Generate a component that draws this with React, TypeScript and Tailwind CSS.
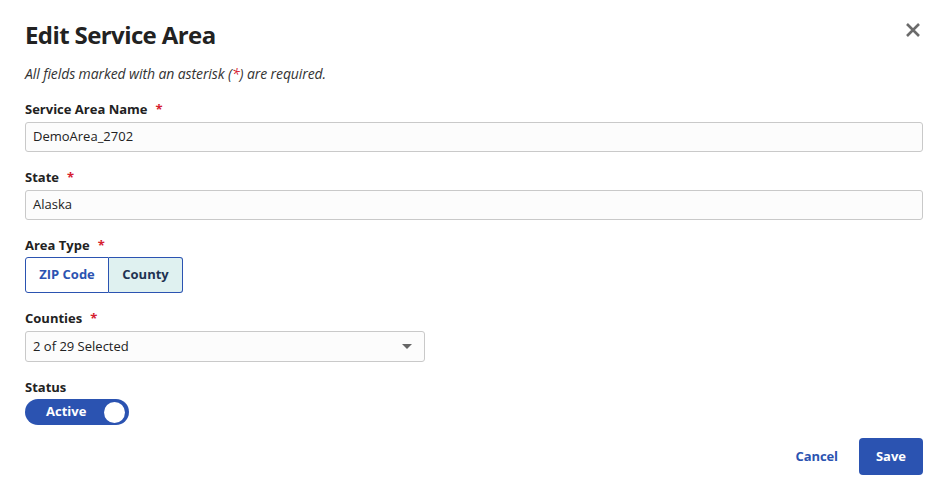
import React from "react";

const Req = () => <span className="ml-[8px] text-[#d6202f]">*</span>;

const Label = ({ text, required }: { text: string; required?: boolean }) => (
  <div className="text-[13px] leading-[18px] font-bold text-[#222]">
    {text}
    {required && <Req />}
  </div>
);

export default function App() {
  return (
    <div
      className="w-[948px] h-[500px] bg-white px-[25px] pt-[19px]"
      style={{ fontFamily: '"Open Sans", "Noto Sans", sans-serif' }}
    >
      <div className="flex justify-between items-start">
        <h2 className="text-[24px] leading-[32px] font-bold tracking-[-0.6px] text-[#222]">Edit Service Area</h2>
        <button className="mt-[3px] mr-[2px] text-[#6b6b6b]">
          <svg width="16" height="16" viewBox="0 0 16 16">
            <path d="M2 2 L14 14 M14 2 L2 14" stroke="currentColor" strokeWidth="2.6" />
          </svg>
        </button>
      </div>
      <p className="mt-[14px] text-[14px] leading-[18px] italic text-[#333] tracking-[-0.1px]">
        All fields marked with an asterisk (<span className="text-[#d6202f]">*</span>) are required.
      </p>

      <div className="mt-[17px]">
        <Label text="Service Area Name" required />
        <div className="mt-[4px] h-[30px] border border-[#c9c9c9] rounded-[3px] bg-[#fcfcfc] px-[7px] flex items-center text-[13px] text-[#222]">
          DemoArea_2702
        </div>
      </div>

      <div className="mt-[16px]">
        <Label text="State" required />
        <div className="mt-[4px] h-[30px] border border-[#c9c9c9] rounded-[3px] bg-[#fcfcfc] px-[7px] flex items-center text-[13px] text-[#222]">
          Alaska
        </div>
      </div>

      <div className="mt-[16px]">
        <Label text="Area Type" required />
        <div className="mt-[3px] flex h-[36px] w-[158px] text-[13px] font-bold">
          <button className="w-[84px] border border-[#2b53b1] rounded-l-[3px] text-[#2b53b1] bg-white">
            ZIP Code
          </button>
          <button className="w-[74px] border border-l-0 border-[#2b53b1] rounded-r-[3px] text-[#1e3352] bg-[#dff1f0]">
            County
          </button>
        </div>
      </div>

      <div className="mt-[16px]">
        <Label text="Counties" required />
        <div className="mt-[4px] w-[400px] h-[31px] border border-[#c9c9c9] rounded-[3px] bg-[#fcfcfc] pl-[7px] pr-[12px] flex items-center justify-between text-[13px] text-[#222]">
          <span>2 of 29 Selected</span>
          <svg width="10" height="5" viewBox="0 0 10 5">
            <path d="M0 0 L10 0 L5 5 Z" fill="#666" />
          </svg>
        </div>
      </div>

      <div className="mt-[16px]">
        <Label text="Status" />
        <div className="mt-[3px] w-[104px] h-[26px] rounded-full bg-[#2b53b1] flex items-center justify-between pl-[21px] pr-[4px]">
          <span className="text-[13px] font-bold text-white">Active</span>
          <span className="w-[21px] h-[21px] rounded-full bg-white" />
        </div>
      </div>

      <div className="mt-[13px] flex justify-end items-center gap-[21px]">
        <button className="text-[13px] font-bold text-[#2b53b1] tracking-[-0.1px]">Cancel</button>
        <button className="w-[64px] h-[37px] rounded-[4px] bg-[#2b53b1] text-white text-[13px] font-bold">
          Save
        </button>
      </div>
    </div>
  );
}
